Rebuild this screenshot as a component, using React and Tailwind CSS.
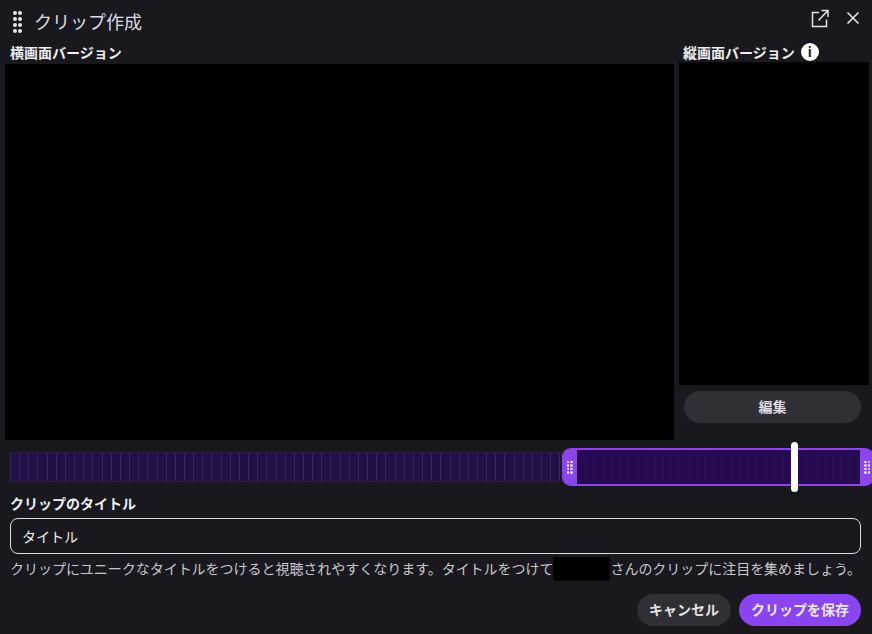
import React from "react";

const font = { fontFamily: '"Inter","Noto Sans CJK JP",sans-serif' };

function Dots({ cls, dot }) {
  return (
    <div className={`grid grid-cols-2 ${cls}`}>
      {Array.from({ length: 8 }).map((_, i) => (
        <span key={i} className={`rounded-full bg-[#e9dcff] ${dot}`} />
      ))}
    </div>
  );
}

function Ticks({ n, cls }) {
  return (
    <div className="flex h-full w-full justify-between overflow-hidden">
      {Array.from({ length: n }).map((_, i) => (
        <span key={i} className={`h-full w-px shrink-0 ${cls}`} />
      ))}
    </div>
  );
}

export default function App() {
  return (
    <div style={font} className="h-[634px] w-[872px] overflow-hidden bg-[#18181e] text-[#efeff1]">
      <header className="flex h-[44px] items-center justify-between pl-[13px] pr-[12px]">
        <div className="flex items-center gap-[11px]">
          <div className="grid h-[23px] w-[10px] grid-cols-2 content-between justify-between">
            {Array.from({ length: 8 }).map((_, i) => (
              <span key={i} className="h-[4px] w-[4px] rounded-full bg-[#e8e8ea]" />
            ))}
          </div>
          <h1 className="mt-[1px] text-[18px] leading-none font-normal text-[#dcdce0]">クリップ作成</h1>
        </div>
        <div className="mb-[8px] flex items-center gap-[16px]">
          <svg width="19" height="19" viewBox="0 0 19 19" fill="none" stroke="#e4e4e7" strokeWidth="1.5">
            <path d="M8 3.5H1.5V17.5H15.5V10.5" />
            <path d="M7.5 11.5L16.5 2M10.5 1.5H17V8" />
          </svg>
          <svg width="14" height="14" viewBox="0 0 14 14" fill="none" stroke="#e4e4e7" strokeWidth="1.6">
            <path d="M1.5 1.5L12.5 12.5M12.5 1.5L1.5 12.5" />
          </svg>
        </div>
      </header>

      <div className="flex h-[341px] items-start pl-[5px]">
        <div className="w-[669px]">
          <div className="-mt-[1px] h-[21px] pl-[5px] text-[14px] leading-[20px] font-bold">横画面バージョン</div>
          <div className="h-[376px] bg-black" />
        </div>
        <div className="ml-[5px] w-[190px]">
          <div className="flex h-[18px] items-center gap-[6px] pb-[2px] pl-[4px] text-[14px] font-bold">
            <span>縦画面バージョン</span>
            <span className="flex h-[18px] w-[18px] items-center justify-center rounded-full bg-white text-[13px] leading-none font-bold text-[#18181e]">i</span>
          </div>
          <div className="h-[323px] bg-black" />
          <button className="mt-[6px] ml-[5px] h-[32px] w-[177px] rounded-full bg-[#2f2f35] pb-[2px] text-[14px] font-bold text-[#dcdce0]">編集</button>
        </div>
      </div>

      <div className="relative mt-[67px] h-[30px] pl-[10px]">
        <div className="h-full w-[560px] border-y border-[#2c2140] bg-[#23104a] opacity-90">
          <Ticks n={62} cls="bg-[#3a2a5c]" />
        </div>
        <div className="absolute top-[-4px] left-[562px] box-border flex h-[38px] w-[312px] rounded-[9px] bg-[#8b45e8]">
          <div className="flex w-[15px] items-center justify-center">
            <Dots cls="gap-[1px]" dot="h-[2.5px] w-[2.5px]" />
          </div>
          <div className="my-[2px] flex-1 bg-[#26094f]">
            <Ticks n={34} cls="bg-[#2a0f54]" />
          </div>
          <div className="flex w-[14px] items-center justify-center">
            <Dots cls="gap-[1px]" dot="h-[2.5px] w-[2.5px]" />
          </div>
        </div>
        <div className="absolute top-[-10px] left-[791px] h-[50px] w-[7px] rounded-full bg-white" />
      </div>

      <label className="mt-[12px] block pl-[10px] text-[14px] leading-[20px] font-bold">クリップのタイトル</label>
      <div className="mt-[4px] ml-[10px] flex h-[36px] w-[851px] items-center rounded-[8px] border border-[#dcdce0] pl-[11px] text-[14px]">タイトル</div>
      <p className="mt-[3px] flex h-[24px] items-center pl-[10px] text-[14px] tracking-[-0.03px] whitespace-nowrap text-[#c8c8cd]">
        <span className="mb-[2px]">クリップにユニークなタイトルをつけると視聴されやすくなります。タイトルをつけて</span>
        <span className="h-[24px] w-[57px] rounded-[2px] bg-black" />
        <span className="mb-[2px]">さんのクリップに注目を集めましょう。</span>
      </p>
      <div className="mt-[13px] flex justify-end gap-[8px] pr-[11px]">
        <button className="h-[32px] w-[94px] rounded-full bg-[#2f2f35] pb-[2px] text-[14px] font-bold text-[#e4e4e7]">キャンセル</button>
        <button className="h-[32px] w-[122px] rounded-full bg-[#8b45f0] pb-[2px] text-[14px] font-bold text-[#e8e8ec]">クリップを保存</button>
      </div>
    </div>
  );
}
